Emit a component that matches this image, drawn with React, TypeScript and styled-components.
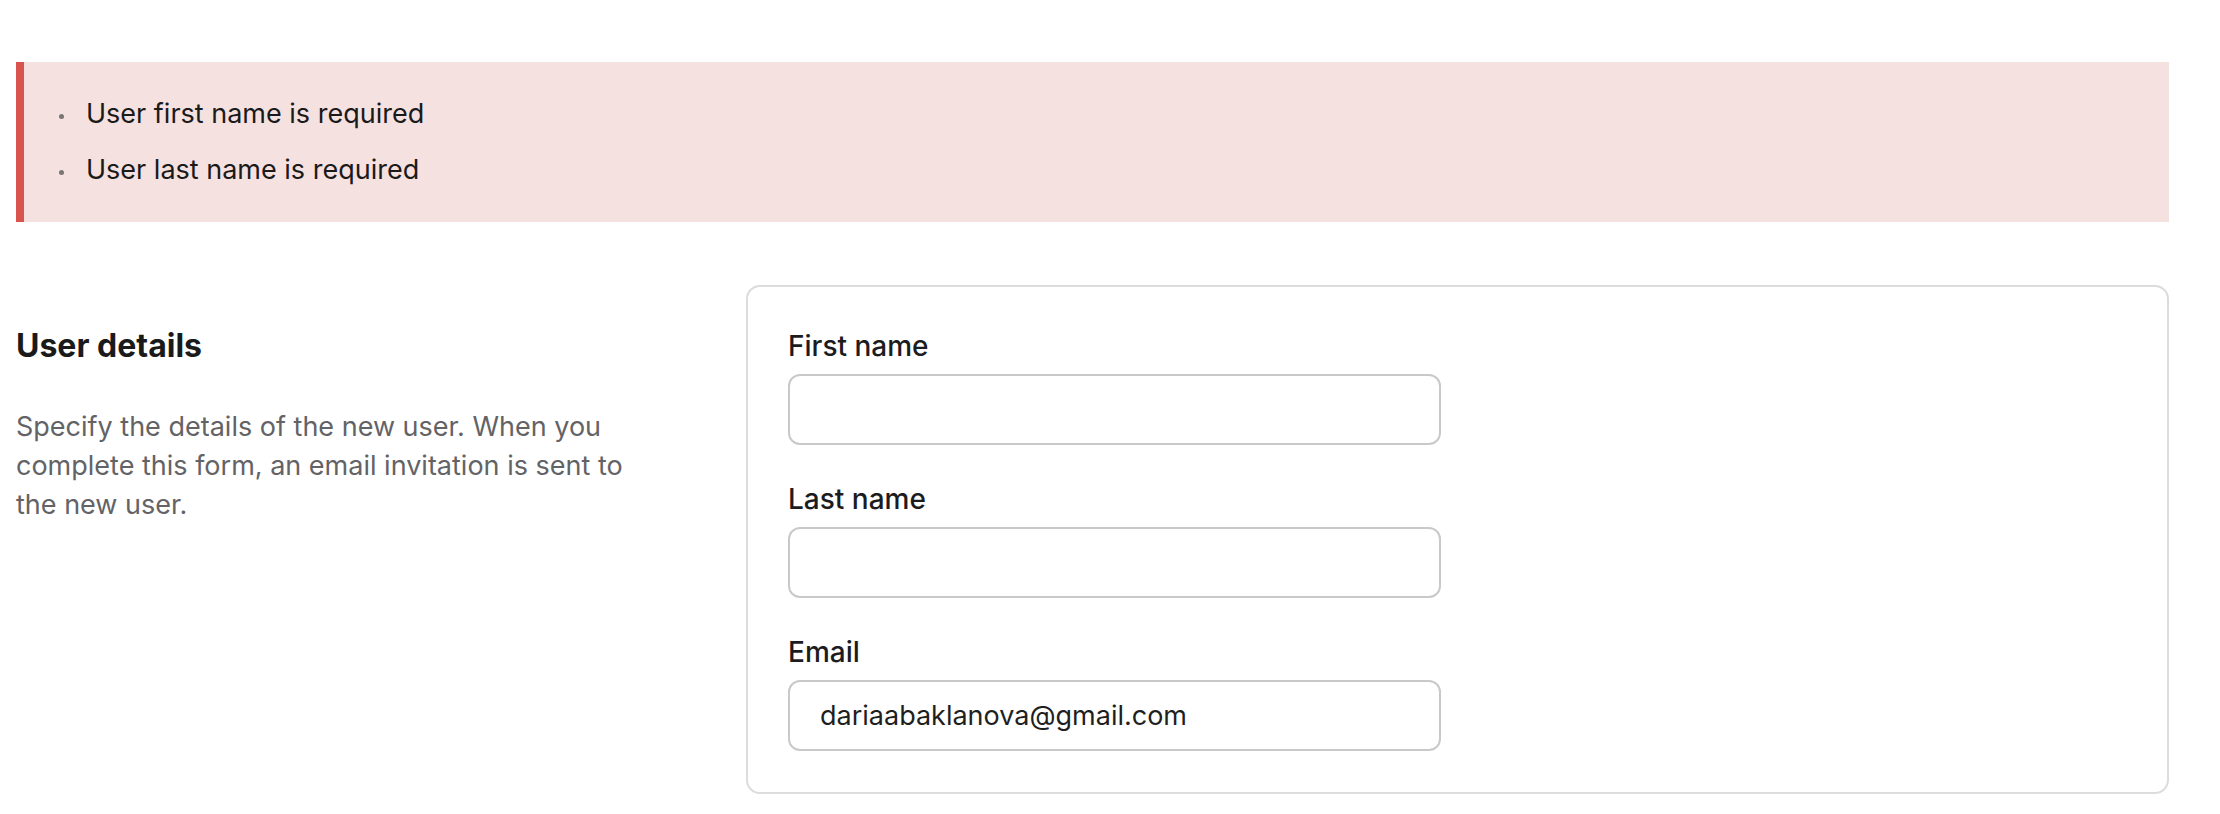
import React from "react";
import styled, { createGlobalStyle } from "styled-components";

const GlobalStyle = createGlobalStyle`
  html, body {
    margin: 0;
    padding: 0;
    background: #ffffff;
  }
  body {
    font-family: Inter, "Noto Sans", "Liberation Sans", sans-serif;
    color: #1d1d1f;
    -webkit-font-smoothing: antialiased;
  }
  * { box-sizing: border-box; }
`;

const Page = styled.main`
  padding: 62px 51px 24px 16px;
`;

const Alert = styled.div`
  background: #f6e1e1;
  border-left: 8px solid #d9534f;
  padding: 24px 0 24px 35px;
`;

const ErrorList = styled.ul`
  list-style: none;
  margin: 0;
  padding: 0;
`;

const ErrorItem = styled.li`
  display: flex;
  align-items: center;
  font-size: 27px;
  line-height: 56px;
  color: #1a1a1a;
  &::before {
    content: "";
    flex: none;
    width: 5px;
    height: 5px;
    border-radius: 50%;
    background: #7a7474;
    margin: 4px 22px 0 0;
  }
`;

const Section = styled.section`
  display: grid;
  grid-template-columns: 730px 1fr;
  margin-top: 63px;
  align-items: start;
`;

const Intro = styled.div`
  padding-top: 41px;
`;

const Heading = styled.h2`
  margin: 0;
  font-size: 32px;
  line-height: 40px;
  font-weight: 700;
  color: #1a1a1a;
`;

const Description = styled.p`
  margin: 41px 0 0;
  max-width: 630px;
  font-size: 27px;
  line-height: 39px;
  color: #636366;
`;

const Card = styled.div`
  border: 2px solid #dcdcdc;
  border-radius: 14px;
  padding: 38px 40px 41px;
  display: flex;
  flex-direction: column;
  gap: 33px;
`;

const Field = styled.label`
  display: flex;
  flex-direction: column;
  gap: 7px;
`;

const FieldLabel = styled.span`
  font-size: 28px;
  line-height: 42px;
  font-weight: 500;
  color: #1c1c1e;
`;

const Input = styled.input`
  width: 653px;
  height: 71px;
  border: 2px solid #c9c9c9;
  border-radius: 12px;
  padding: 0 30px;
  font-family: inherit;
  font-size: 27px;
  color: #1f1f1f;
  background: #ffffff;
  outline: none;
`;

export default function App() {
  return (
    <>
      <GlobalStyle />
      <Page>
        <Alert role="alert">
          <ErrorList>
            <ErrorItem>User first name is required</ErrorItem>
            <ErrorItem>User last name is required</ErrorItem>
          </ErrorList>
        </Alert>
        <Section>
          <Intro>
            <Heading>User details</Heading>
            <Description>
              Specify the details of the new user. When you complete this form, an email invitation is sent to the new user.
            </Description>
          </Intro>
          <Card>
            <Field>
              <FieldLabel>First name</FieldLabel>
              <Input type="text" defaultValue="" />
            </Field>
            <Field>
              <FieldLabel>Last name</FieldLabel>
              <Input type="text" defaultValue="" />
            </Field>
            <Field>
              <FieldLabel>Email</FieldLabel>
              <Input type="email" defaultValue="dariaabaklanova@gmail.com" />
            </Field>
          </Card>
        </Section>
      </Page>
    </>
  );
}
